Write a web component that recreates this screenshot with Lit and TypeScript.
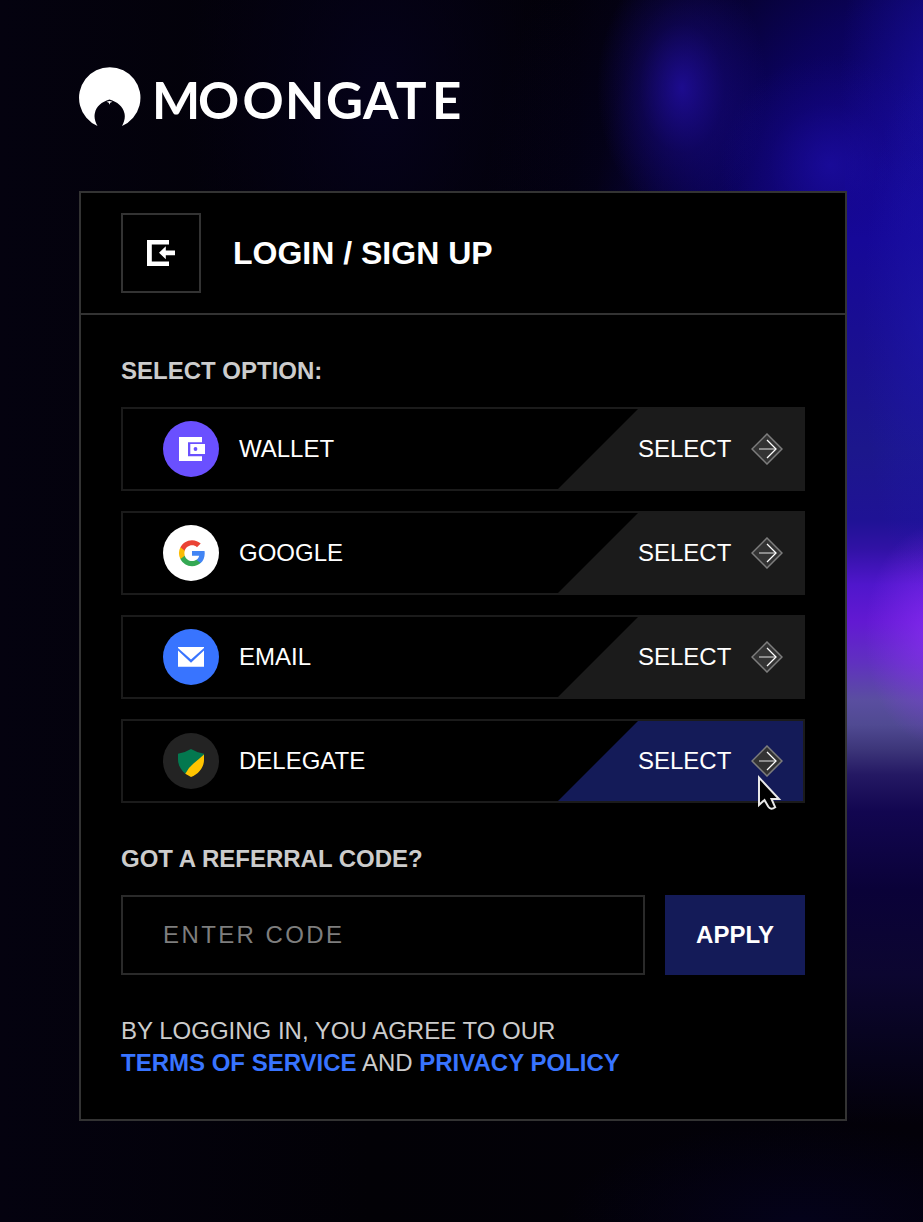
import { LitElement, html, css, svg } from "lit";
import { customElement, property } from "lit/decorators.js";

const icons: Record<string, unknown> = {
  wallet: svg`<circle cx="28" cy="28" r="28" fill="#6a50ff"/>
    <path d="M16 16h23v5.200H25v14h14V40H16z" fill="#fff"/>
    <path d="M27.300 23h14.700v10H27.300z" fill="#fff"/>
    <circle cx="32.500" cy="28" r="1.900" fill="#6a50ff"/>`,
  google: svg`<circle cx="28" cy="28" r="28" fill="#fff"/>
    <g transform="translate(16 15.200) scale(1.083)">
      <path fill="#4285f4" d="M23.750 12.270c0-.820-.070-1.600-.200-2.360H12v4.550h6.600c-.300 1.500-1.150 2.800-2.450 3.650v3h3.900c2.300-2.120 3.700-5.240 3.700-8.840z"/>
      <path fill="#34a853" d="M12 24c3.250 0 5.970-1.070 7.960-2.900l-3.900-3c-1.080.720-2.450 1.150-4.060 1.150-3.120 0-5.770-2.100-6.710-4.950H1.280v3.100C3.260 21.300 7.310 24 12 24z"/>
      <path fill="#fbbc05" d="M5.290 14.300a7.200 7.200 0 0 1 0-4.600V6.600H1.280a12 12 0 0 0 0 10.800z"/>
      <path fill="#ea4335" d="M12 4.750c1.770 0 3.350.600 4.600 1.800l3.450-3.450C17.950 1.190 15.240 0 12 0 7.310 0 3.260 2.700 1.280 6.600l4.010 3.100C6.230 6.860 8.880 4.750 12 4.750z"/>
    </g>`,
  email: svg`<circle cx="28" cy="28" r="28" fill="#3874ff"/>
    <path d="M15 18h26v1L28 30.500 15 19z" fill="#fff"/>
    <path d="M15 21.600 28 33.800 41 21.600V37.700H15z" fill="#fff"/>`,
  delegate: svg`<circle cx="28" cy="28" r="28" fill="#232323"/>
    <path d="M28 16Q34 19.700 41 20.700V23L22.700 41C18 37.500 15 32 15 26.500V20.700Q22 19.700 28 16z" fill="#03784f"/>
    <path d="M41 21.500V27C41 34 35.500 41.500 28 44L22.300 40.700Q25 35 30.500 30.500T41 21.500z" fill="#ffc400"/>`,
};

@customElement("option-row")
class OptionRow extends LitElement {
  @property() label = "";
  @property() icon = "";
  @property({ type: Boolean }) active = false;

  static styles = css`
    :host { display: block; }
    .row {
      box-sizing: border-box;
      height: 84px;
      border: 2px solid #1b1b1b;
      display: flex;
      align-items: center;
      padding-left: 40px;
      gap: 20px;
      color: #fff;
      font-size: 24px;
    }
    .badge { width: 56px; height: 56px; flex: none; }
    .label { flex: 1; }
    .select {
      box-sizing: border-box;
      width: 245px;
      height: 80px;
      display: flex;
      align-items: center;
      padding-left: 80px;
      gap: 20px;
      background: #1b1b1b;
      clip-path: polygon(80px 0, 100% 0, 100% 100%, 0 100%);
    }
    .active { background: #141b58; }
    .word { width: 93px; white-space: nowrap; }
    .arrow { width: 32px; height: 32px; flex: none; }
  `;

  render() {
    return html`<div class="row">
      <svg class="badge" viewBox="0 0 56 56">${icons[this.icon]}</svg>
      <span class="label">${this.label}</span>
      <div class="select ${this.active ? "active" : ""}">
        <span class="word">SELECT</span>
        <svg class="arrow" viewBox="0 0 32 32" fill="none">
          <path d="M16 1 31 16 16 31 1 16z" fill="#333" stroke="#7d7d7d" stroke-width="1.500"/>
          <path d="M8 16h16" stroke="#aaa" stroke-width="1.500"/>
          <path d="M16 7l9 9-9 9" stroke="#fff" stroke-width="1.300"/>
        </svg>
      </div>
    </div>`;
  }
}

@customElement("app-root")
class AppRoot extends LitElement {
  static styles = css`
    :host {
      display: block;
      font-family: "Liberation Sans", Arial, Helvetica, sans-serif;
    }
    .page {
      position: relative;
      box-sizing: border-box;
      height: 1222px;
      overflow: hidden;
      padding: 66px 76px 0 79px;
      background:
        radial-gradient(ellipse 70px 110px at 935px 635px, rgba(150, 50, 255, 0.6), transparent),
        radial-gradient(ellipse 60px 260px at 923px 330px, rgba(30, 24, 175, 0.5), transparent),
        linear-gradient(
          180deg,
          rgba(21, 7, 152, 0) 150px,
          #160898 240px,
          #1a1090 360px,
          #1c178c 450px,
          #1f1295 520px,
          #3012a4 548px,
          #5016cc 585px,
          #6219d2 622px,
          #6030c0 662px,
          #5a4ea0 700px,
          #504a92 725px,
          #3c3579 750px,
          #241863 775px,
          #120650 812px,
          #0a0238 890px,
          #0c0630 975px,
          #06031a 1060px,
          rgba(4, 2, 10, 0) 1125px
        ) right / 78px 100% no-repeat,
        radial-gradient(ellipse 85px 130px at 682px 88px, rgba(34, 14, 165, 0.8), rgba(26, 10, 140, 0.38) 50%, transparent),
        radial-gradient(ellipse 110px 110px at 830px 165px, rgba(30, 14, 170, 0.65), rgba(24, 8, 150, 0.28) 55%, transparent),
        radial-gradient(ellipse 100px 250px at 940px 90px, rgba(26, 16, 165, 0.7), transparent),
        radial-gradient(ellipse 440px 520px at 923px 240px, #15069a, rgba(14, 3, 125, 0.7) 45%, rgba(8, 2, 70, 0.25) 75%, transparent),
        radial-gradient(ellipse 240px 100px at 800px 1222px, #04021a, transparent),
        radial-gradient(ellipse 200px 330px at 380px 100px, #05021a, transparent),
        linear-gradient(90deg, #04020f, #020106 40%, #030109);
    }
    .logo { display: block; width: 384px; height: 62px; }
    .wordmark {
      font-family: Lato, "Liberation Sans", sans-serif;
      font-weight: 700;
      font-size: 51px;
      fill: #fff;
    }
    .card {
      box-sizing: border-box;
      width: 768px;
      height: 930px;
      margin-top: 63px;
      border: 2px solid #333;
      background: #000;
    }
    .head {
      box-sizing: border-box;
      height: 122px;
      border-bottom: 2px solid #333;
      display: flex;
      align-items: center;
      gap: 32px;
      padding-left: 40px;
    }
    .back {
      box-sizing: border-box;
      width: 80px;
      height: 80px;
      border: 2px solid #333;
      display: grid;
      place-items: center;
    }
    .title { margin: 0; font-size: 32px; line-height: 40px; color: #fff; }
    .body { padding: 40px 40px 0; }
    .caption { margin: 0; font-size: 24px; line-height: 32px; font-weight: 700; color: #ccc; }
    .options { display: flex; flex-direction: column; gap: 20px; margin: 20px 0 40px; }
    .referral { display: flex; gap: 20px; margin: 20px 0 40px; }
    .code {
      box-sizing: border-box;
      flex: 1;
      min-width: 0;
      height: 80px;
      margin: 0;
      padding: 0 40px;
      border: 2px solid #2a2a2a;
      border-radius: 0;
      background: #000;
      color: #fff;
      font: 24px "Liberation Sans", Arial, sans-serif;
      letter-spacing: 2.400px;
    }
    .code::placeholder { color: #7e7e7e; opacity: 1; }
    .apply {
      width: 140px;
      height: 80px;
      border: 0;
      padding: 0;
      background: #141b58;
      color: #fff;
      font: 700 24px "Liberation Sans", Arial, sans-serif;
    }
    .terms { margin: 0; font-size: 24px; line-height: 32px; color: #ccc; }
    .link { color: #3874ff; font-weight: 700; }
    .cursor { position: absolute; left: 757px; top: 774px; width: 26px; height: 38px; }
  `;

  render() {
    return html`<main class="page">
      <svg class="logo" viewBox="0 0 384 62" aria-label="MOONGATE">
        <path fill="#fff" d="M18.500 60A30.700 30.700 0 1 1 43 60C45.500 55 46.300 51.500 45.500 47.500 43.800 40 38.500 36 30.500 33.500 22.500 36 17.200 40 15.800 47.500 15 51.500 16 55.500 18.500 60z"/>
        <path fill="#fff" d="M27.500 35.700 30.500 35l3 .700-2.300 1-.700 2-.700-2z"/>
        <text class="wordmark" y="52.500" x="73 119 163.500 206 247 284 317 353">MOONGATE</text>
      </svg>
      <section class="card">
        <header class="head">
          <div class="back">
            <svg width="28" height="26" viewBox="0 0 28 26" fill="#fff">
              <path d="M0 0h22v4.500H4.800v17H22V26H0z"/>
              <path d="M12 12.700 18.800 6.200v4.300H28v4.700h-9.200v4z"/>
            </svg>
          </div>
          <h1 class="title">LOGIN / SIGN UP</h1>
        </header>
        <div class="body">
          <h2 class="caption">SELECT OPTION:</h2>
          <div class="options">
            <option-row label="WALLET" icon="wallet"></option-row>
            <option-row label="GOOGLE" icon="google"></option-row>
            <option-row label="EMAIL" icon="email"></option-row>
            <option-row label="DELEGATE" icon="delegate" active></option-row>
          </div>
          <h2 class="caption">GOT A REFERRAL CODE?</h2>
          <div class="referral">
            <input class="code" placeholder="ENTER CODE" />
            <button class="apply">APPLY</button>
          </div>
          <p class="terms">
            BY LOGGING IN, YOU AGREE TO OUR<br />
            <span class="link">TERMS OF SERVICE</span> AND
            <span class="link">PRIVACY POLICY</span>
          </p>
        </div>
      </section>
      <svg class="cursor" viewBox="0 0 26 38">
        <path d="M2 3.500V31l5.500-5 3.700 6.500q2.500 4 7 .800L14.500 25H22z" fill="#000" stroke="#e8e8e8" stroke-width="2"/>
      </svg>
    </main>`;
  }
}
